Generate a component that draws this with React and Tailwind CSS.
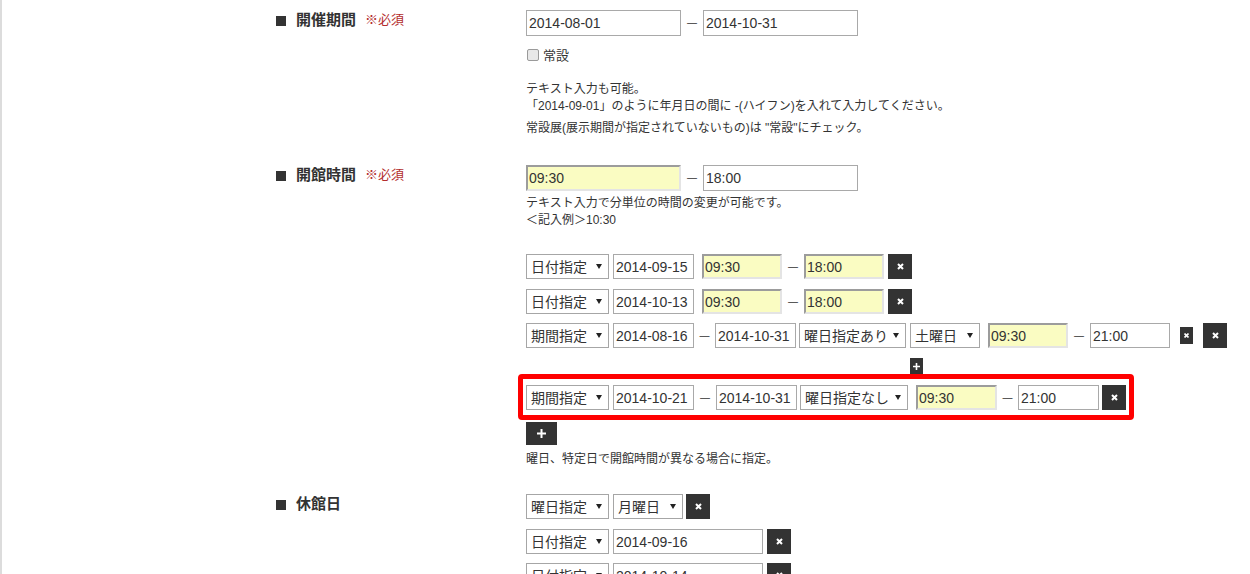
import React from "react";

function Arrow() {
  return (
    <svg width="6" height="5" viewBox="0 0 6 5" className="shrink-0">
      <path d="M0 0H6L3 5Z" fill="#222" />
    </svg>
  );
}

function Sel({ label, w }) {
  return (
    <div
      className={`h-[25px] ${w} shrink-0 border border-[#a6a6a6] bg-white flex items-center justify-between pl-[4px] pr-[6px] text-[14px] leading-none`}
    >
      <span>{label}</span>
      <Arrow />
    </div>
  );
}

function Inp({ v, w, y, h = "h-[25px]" }) {
  return (
    <div
      className={`${h} ${w} shrink-0 flex items-center text-[14px] leading-none ${
        y
          ? "bg-[#fafcc2] border-2 border-t-[#9c9c9c] border-l-[#9c9c9c] border-r-[#e4e4e4] border-b-[#e4e4e4] pl-px"
          : "bg-white border border-[#a9a9a9] pl-[2px]"
      }`}
    >
      {v}
    </div>
  );
}

function Dash({ w = "w-[22px]" }) {
  return (
    <span className={`${w} shrink-0 text-center text-[10px] leading-none font-['Liberation_Sans',sans-serif]`}>
      —
    </span>
  );
}

function XBtn({ small, cls = "" }) {
  if (small) {
    return (
      <div className={`w-[13px] h-[17px] shrink-0 bg-[#333] flex items-center justify-center ${cls}`}>
        <svg width="5" height="5" viewBox="0 0 5 5">
          <path d="M0.5 0.5L4.5 4.5M4.5 0.5L0.5 4.5" stroke="white" strokeWidth="1.6" />
        </svg>
      </div>
    );
  }
  return (
    <div className={`w-[24px] h-[25px] shrink-0 bg-[#333] flex items-center justify-center ${cls}`}>
      <svg width="7" height="7" viewBox="0 0 7 7">
        <path d="M1 1L6 6M6 1L1 6" stroke="white" strokeWidth="2" />
      </svg>
    </div>
  );
}

function Label({ t, req }) {
  return (
    <div className="w-[250px] shrink-0 flex items-center h-[18px]">
      <span className="w-[10px] h-[10px] bg-[#333] mr-[10px] mt-[3px] shrink-0" />
      <span className="text-[15px] font-bold leading-none">{t}</span>
      {req && <span className="ml-[9px] text-[13px] leading-none text-[#b32d2d]">※必須</span>}
    </div>
  );
}

export default function App() {
  return (
    <div className="h-[574px] overflow-hidden bg-white border-l-2 border-[#dcdcdc] text-[#333] font-['Liberation_Sans','Noto_Sans_CJK_JP',sans-serif]">
      <div className="pl-[274px] pt-[10px]">
        {/* 開催期間 */}
        <div className="flex">
          <Label t="開催期間" req />
          <div>
            <div className="flex items-center">
              <Inp v="2014-08-01" w="w-[155px]" h="h-[26px]" />
              <Dash />
              <Inp v="2014-10-31" w="w-[155px]" h="h-[26px]" />
            </div>
            <div className="flex items-center mt-[12px] h-[14px]">
              <span className="ml-px w-[12px] h-[12px] rounded-[2px] border border-[#9a9a9a] bg-[#e8e8e8]" />
              <span className="ml-[4px] text-[13px] leading-none">常設</span>
            </div>
            <div className="mt-[19px] text-[12px] leading-[17px]">
              <p>テキスト入力も可能。</p>
              <p>「2014-09-01」のように年月日の間に -(ハイフン)を入れて入力してください。</p>
            </div>
            <p className="mt-[5px] text-[12px] leading-[17px]">
              常設展(展示期間が指定されていないもの)は "常設"にチェック。
            </p>
          </div>
        </div>

        {/* 開館時間 */}
        <div className="flex mt-[28px]">
          <Label t="開館時間" req />
          <div>
            <div className="flex items-center">
              <Inp v="09:30" w="w-[155px]" h="h-[26px]" y />
              <Dash />
              <Inp v="18:00" w="w-[155px]" h="h-[26px]" />
            </div>
            <div className="mt-[4px] text-[12px] leading-[17px]">
              <p>テキスト入力で分単位の時間の変更が可能です。</p>
              <p>＜記入例＞10:30</p>
            </div>

            <div className="mt-[25px] flex items-center">
              <Sel label="日付指定" w="w-[83px]" />
              <div className="ml-[4px]"><Inp v="2014-09-15" w="w-[81px]" /></div>
              <div className="ml-[8px]"><Inp v="09:30" w="w-[80px]" y /></div>
              <Dash w="w-[22px]" />
              <Inp v="18:00" w="w-[80px]" y />
              <XBtn cls="ml-[4px]" />
            </div>
            <div className="mt-[10px] flex items-center">
              <Sel label="日付指定" w="w-[83px]" />
              <div className="ml-[4px]"><Inp v="2014-10-13" w="w-[81px]" /></div>
              <div className="ml-[8px]"><Inp v="09:30" w="w-[80px]" y /></div>
              <Dash w="w-[22px]" />
              <Inp v="18:00" w="w-[80px]" y />
              <XBtn cls="ml-[4px]" />
            </div>
            <div className="mt-[9px] flex items-center">
              <Sel label="期間指定" w="w-[83px]" />
              <div className="ml-[4px]"><Inp v="2014-08-16" w="w-[81px]" /></div>
              <Dash w="w-[21px]" />
              <Inp v="2014-10-31" w="w-[81px]" />
              <div className="ml-[3px]"><Sel label="曜日指定あり" w="w-[107px]" /></div>
              <div className="ml-[4px]"><Sel label="土曜日" w="w-[70px]" /></div>
              <div className="ml-[8px]"><Inp v="09:30" w="w-[80px]" y /></div>
              <Dash w="w-[22px]" />
              <Inp v="21:00" w="w-[80px]" />
              <XBtn small cls="ml-[10px]" />
              <XBtn cls="ml-[10px]" />
            </div>
            <div className="mt-[10px] pl-[384px]">
              <div className="w-[13px] h-[17px] bg-[#333] flex items-center justify-center">
                <svg width="7" height="7" viewBox="0 0 7 7">
                  <path d="M3.5 0V7M0 3.5H7" stroke="white" strokeWidth="1.6" />
                </svg>
              </div>
            </div>

            <div className="relative mt-[10px]">
              <div className="absolute -left-[8px] -top-[11px] w-[616px] h-[46px] border-[5px] border-[#ff0000] rounded-[4px] pointer-events-none" />
              <div className="flex items-center">
                <Sel label="期間指定" w="w-[83px]" />
                <div className="ml-[4px]"><Inp v="2014-10-21" w="w-[81px]" /></div>
                <Dash w="w-[22px]" />
                <Inp v="2014-10-31" w="w-[81px]" />
                <div className="ml-[3px]"><Sel label="曜日指定なし" w="w-[108px]" /></div>
                <div className="ml-[8px]"><Inp v="09:30" w="w-[81px]" y /></div>
                <Dash w="w-[21px]" />
                <Inp v="21:00" w="w-[81px]" />
                <XBtn cls="ml-[3px]" />
              </div>
            </div>
            <div className="mt-[12px] w-[31px] h-[23px] bg-[#333] flex items-center justify-center">
              <svg width="9" height="9" viewBox="0 0 9 9">
                <path d="M4.5 0V9M0 4.5H9" stroke="white" strokeWidth="2" />
              </svg>
            </div>
            <p className="mt-[6px] text-[12px] leading-[17px]">曜日、特定日で開館時間が異なる場合に指定。</p>
          </div>
        </div>

        {/* 休館日 */}
        <div className="flex mt-[26px]">
          <Label t="休館日" />
          <div>
            <div className="flex items-center">
              <Sel label="曜日指定" w="w-[83px]" />
              <div className="ml-[4px]"><Sel label="月曜日" w="w-[70px]" /></div>
              <XBtn cls="ml-[3px]" />
            </div>
            <div className="mt-[10px] flex items-center">
              <Sel label="日付指定" w="w-[83px]" />
              <div className="ml-[4px]"><Inp v="2014-09-16" w="w-[150px]" /></div>
              <XBtn cls="ml-[4px]" />
            </div>
            <div className="mt-[9px] flex items-center">
              <Sel label="日付指定" w="w-[83px]" />
              <div className="ml-[4px]"><Inp v="2014-10-14" w="w-[150px]" /></div>
              <XBtn cls="ml-[4px]" />
            </div>
          </div>
        </div>
      </div>
    </div>
  );
}
